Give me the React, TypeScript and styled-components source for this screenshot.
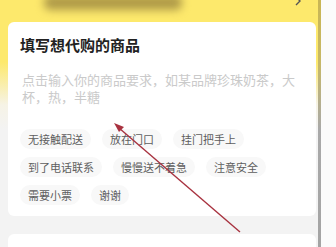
import React from "react";
import styled, { createGlobalStyle } from "styled-components";

const Global = createGlobalStyle`
  html, body { margin: 0; padding: 0; background: #fafafa; }
  body { font-family: "Noto Sans CJK SC", "Noto Sans", sans-serif; }
`;

const Page = styled.div`
  position: relative;
  width: 336px;
  height: 247px;
  overflow: hidden;
  display: flex;
  background: #fafafa;
`;

const Main = styled.div`
  width: 318px;
  height: 247px;
  padding: 0 2px 0 8px;
  box-sizing: border-box;
  background: linear-gradient(#fde96c 0px, #fde96c 62px, #f6f3e6 105px, #f3f3f3 130px, #f3f3f3 100%);
  display: flex;
  flex-direction: column;
`;

const ScrollBar = styled.div`
  width: 3px;
  height: 247px;
  background: linear-gradient(#c9b654 0px, #c7b866 60px, #a9a9a9 130px, #a4a4a4 100%);
`;

const Gutter = styled.div`
  flex: 1;
  background: #fbfbfb;
`;

const Header = styled.div`
  height: 22px;
  display: flex;
  align-items: flex-start;
`;

const Blob = styled.div`
  margin-left: 36px;
  margin-top: -5px;
  width: 138px;
  height: 15px;
  border-radius: 6px;
  background: rgba(150, 128, 60, 0.75);
  filter: blur(4px);
`;

const Chevron = styled.svg`
  margin-left: auto;
  margin-right: 14px;
  margin-top: -4px;
`;

const Card = styled.div`
  background: #fff;
  border-radius: 6px;
  padding: 13px 12px 11px 12px;
`;

const Title = styled.div`
  font-size: 15px;
  line-height: 20px;
  font-weight: 700;
  color: #222;
`;

const Placeholder = styled.div`
  margin-top: 16px;
  padding-left: 2px;
  font-size: 13px;
  line-height: 17px;
  color: #cacaca;
`;

const Tags = styled.div`
  margin-top: 24px;
  display: flex;
  flex-wrap: wrap;
  gap: 8px 11px;
`;

const Tag = styled.div`
  height: 20px;
  padding: 0 8px;
  border-radius: 10px;
  background: #f8f8f8;
  color: #5e5e5e;
  font-size: 11px;
  line-height: 20px;
  white-space: nowrap;
`;

const NextCard = styled.div`
  margin-top: 18px;
  flex: 1;
  background: #fff;
  border-radius: 6px 6px 0 0;
`;

const Annotation = styled.svg`
  position: absolute;
  left: 0;
  top: 0;
  pointer-events: none;
`;

const tags = [
  "无接触配送",
  "放在门口",
  "挂门把手上",
  "到了电话联系",
  "慢慢送不着急",
  "注意安全",
  "需要小票",
  "谢谢",
];

export default function App() {
  return (
    <Page>
      <Global />
      <Main>
        <Header>
          <Blob />
          <Chevron width="8" height="10" viewBox="0 0 8 10">
            <path d="M2 1 L6 5 L2 9" stroke="#555" strokeWidth="1.4" fill="none" />
          </Chevron>
        </Header>
        <Card>
          <Title>填写想代购的商品</Title>
          <Placeholder>点击输入你的商品要求，如某品牌珍珠奶茶，大杯，热，半糖</Placeholder>
          <Tags>
            {tags.map((t) => (
              <Tag key={t}>{t}</Tag>
            ))}
          </Tags>
        </Card>
        <NextCard />
      </Main>
      <ScrollBar />
      <Gutter />
      <Annotation width="336" height="247" viewBox="0 0 336 247">
        <line x1="240" y1="232" x2="119" y2="128" stroke="#a8323f" strokeWidth="1.4" />
        <polygon points="114,123 124,127 119,132" fill="#a8323f" />
      </Annotation>
    </Page>
  );
}
